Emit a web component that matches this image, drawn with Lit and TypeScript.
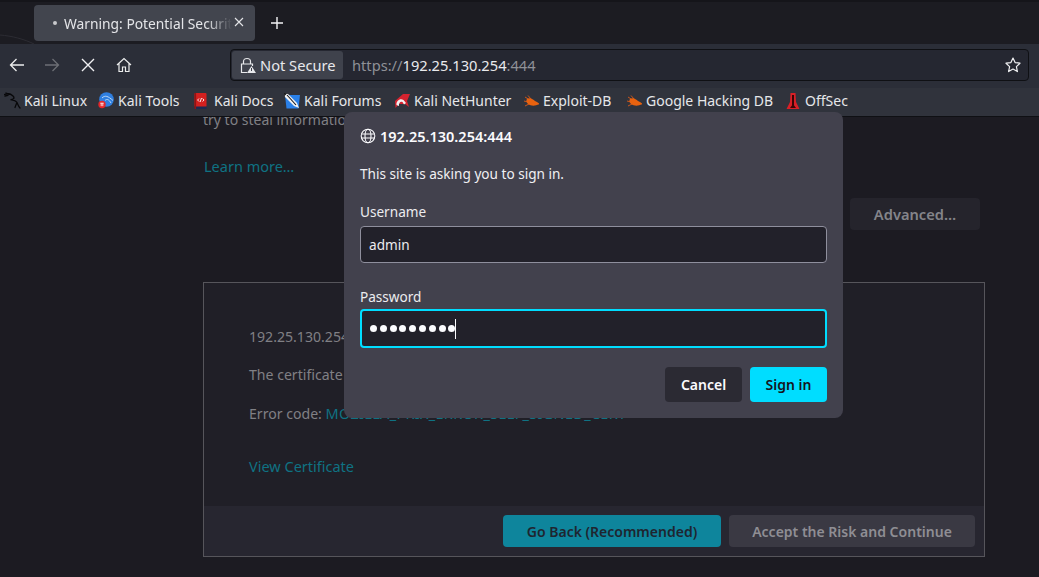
import { LitElement, html, css, svg } from "lit";
import { customElement } from "lit/decorators.js";

const bug = svg`<svg width="17" height="16" viewBox="0 0 17 16"><path d="M2 4 L6 6.5 M5 2.5 L8 6 M1 8 L5 9 M2 13 L6 11 M16 11 L12 10" stroke="#c9561c" stroke-width="1" fill="none"/><path d="M4 6 C7 4 10 6 12 8 C14 9 16 10 16 11 C12 13.5 8 13 5 11 C3 9 3 7 4 6Z" fill="#e8620f"/></svg>`;

const marks: Record<string, unknown> = {
  dragon: svg`<svg width="17" height="17" viewBox="0 0 17 17" fill="none" stroke="#08080a" stroke-width="1.3" stroke-linecap="round"><path d="M0.5 2.5 C4 1 7 2 9 4 C11 6 9.5 7.6 6.5 7.6 C9 8 12 8.6 13 10.6 C13.8 12.2 14.5 14.5 16 16"/><path d="M2 1 L5.5 2.4 M12.5 11.5 L11 15.5 M1 4 L4 3.4"/></svg>`,
  tools: svg`<svg width="16" height="17" viewBox="0 0 16 17"><circle cx="8.5" cy="7.5" r="7.3" fill="#2f7fe0"/><path d="M4 6 C7 3 10 4 15 8.5 M7 8.5 C9 6.5 11 7.5 13 11" stroke="#bcd8f6" stroke-width="1" fill="none"/><circle cx="4" cy="12.5" r="3.7" fill="#e3262a"/><path d="M2.3 11.2 H5.7 M3.2 11.2 V14.2 M4.8 11.2 V14.2" stroke="#fff" stroke-width=".8"/></svg>`,
  docs: svg`<svg width="13" height="16" viewBox="0 0 13 16"><rect x="0.5" y="0" width="12" height="14" rx="1" fill="#d3201f"/><rect x="0.5" y="13.5" width="12" height="2.5" fill="#1d2a52"/><rect x="0.5" y="0" width="1.6" height="16" fill="#8f1414"/><path d="M5 5.5 L3.6 7 L5 8.5 M8.6 5.5 L10 7 L8.6 8.5 M7.5 5 L6.1 9" stroke="#fff" stroke-width=".9" fill="none"/></svg>`,
  forums: svg`<svg width="16" height="16" viewBox="0 0 16 16"><path d="M1 2 H16 L14.5 15.5 H2.5Z" fill="#2a80e8"/><path d="M0.5 0.5 L4 1 L13 10 L15 15 L10 13 L1 4Z" fill="#f2f2f2"/><path d="M3 2 L12 12" stroke="#15151a" stroke-width="1.1"/><path d="M0 0 L3 0.5 L0.5 3Z" fill="#111"/></svg>`,
  hunter: svg`<svg width="16" height="16" viewBox="0 0 16 16"><path d="M1 8 L9 1 H16 L13 8 L15 14 L11 11 H5 L1.5 15Z" fill="#d5232f"/><path d="M2.5 12 C2 8 6 5 9.5 7 L12 10 L10 11.5 L8.5 9 C6.5 8 4.5 10 5 13Z" fill="#f1f1f1"/></svg>`,
  bug,
  offsec: svg`<svg width="16" height="18" viewBox="0 0 16 18"><path d="M5.5 1 H10.5 L11 10 L14.5 17 H1.5 L5 10Z" fill="#d91f26"/><path d="M8 3 V13" stroke="#3a0606" stroke-width="2"/><path d="M5 16 L8 12 L11 16Z" fill="#3a0606"/></svg>`,
};

const bookmarks: [string, string, number][] = [
  ["dragon", "Kali Linux", 94],
  ["tools", "Kali Tools", 96],
  ["docs", "Kali Docs", 90],
  ["forums", "Kali Forums", 110],
  ["hunter", "Kali NetHunter", 129],
  ["bug", "Exploit-DB", 103],
  ["bug", "Google Hacking DB", 159],
  ["offsec", "OffSec", 60],
];

@customElement("app-root")
export class AppRoot extends LitElement {
  static styles = css`
    :host {
      display: flex;
      flex-direction: column;
      width: 1039px;
      height: 577px;
      overflow: hidden;
      position: relative;
      background: #1c1b22;
      color: #fbfbfe;
      font-family: "Noto Sans", sans-serif;
      font-size: 14px;
    }
    svg { display: block; flex: none; }
    .tabstrip {
      height: 44px;
      box-sizing: border-box;
      flex: none;
      display: flex;
      align-items: flex-start;
      padding: 5px 0 0 34px;
      background: #1c1c22;
      border-top: 2px solid #15151a;
      position: relative;
    }
    .swirl { position: absolute; left: 0; top: 0; }
    .tab {
      width: 221px;
      height: 36px;
      margin-top: -2px;
      box-sizing: border-box;
      background: #42454e;
      border-radius: 4px;
      display: flex;
      align-items: center;
      padding-left: 19px;
      position: relative;
      font-size: 13.8px;
      color: #e4e5e8;
    }
    .dot { width: 4px; height: 4px; border-radius: 50%; background: #c8c9cc; margin-right: 7px; flex: none; }
    .title {
      width: 168px;
      white-space: nowrap;
      overflow: hidden;
      -webkit-mask-image: linear-gradient(to right, #000 85%, transparent);
      mask-image: linear-gradient(to right, #000 85%, transparent);
    }
    .tab .x { margin-left: 2px; margin-top: -2px; }
    .plus { margin: 10px 0 0 16px; }
    .nav {
      height: 44px;
      flex: none;
      box-sizing: border-box;
      background: #2b2e38;
      display: flex;
      align-items: center;
      padding: 0 10px 2px 9px;
    }
    .navicons { display: flex; align-items: center; gap: 19px; width: 221px; }
    .url {
      flex: 1;
      height: 32px;
      box-sizing: border-box;
      border: 1px solid #0f1014;
      border-radius: 4px;
      background: #252731;
      display: flex;
      align-items: center;
      padding: 0 2px 0 1px;
    }
    .secure {
      height: 28px;
      width: 111px;
      box-sizing: border-box;
      background: #3f424c;
      border-radius: 3px;
      display: flex;
      align-items: center;
      padding-left: 8px;
      gap: 4px;
      font-size: 14.67px;
      color: #e8e9ec;
      flex: none;
    }
    .addr { margin-left: 9px; font-size: 14.67px; color: #8f9197; flex: 1; }
    .addr b { font-weight: 400; color: #e9eaed; }
    .star { margin-right: 5px; }
    .bookmarks {
      height: 29px;
      flex: none;
      box-sizing: border-box;
      background: #30333c;
      border-bottom: 1px solid #0f1014;
      display: flex;
      align-items: center;
      padding: 0 0 3px 4px;
      font-size: 14px;
      color: #e6e7ea;
      position: relative;
      z-index: 1;
    }
    .bm { display: flex; align-items: center; gap: 4px; white-space: nowrap; flex: none; }
    .ic { width: 16px; display: flex; justify-content: flex-start; flex: none; }
    .page {
      flex: 1;
      min-height: 0;
      overflow: hidden;
      box-sizing: border-box;
      padding: 0 54px 0 203px;
      color: #808085;
      font-size: 14.5px;
    }
    .cut { margin-top: -9px; height: 24px; line-height: 24px; white-space: nowrap; font-size: 14px; }
    .learn { margin-top: 22px; height: 24px; line-height: 24px; color: #0f7283; padding-left: 1px; }
    .adv-row { display: flex; justify-content: flex-end; margin: 20px 5px 0 0; }
    .adv {
      width: 130px;
      height: 32px;
      border-radius: 4px;
      background: #25242c;
      color: #84848a;
      font-weight: 600;
      font-size: 14.67px;
      display: flex;
      align-items: center;
      justify-content: center;
    }
    .box {
      margin-top: 52px;
      height: 275px;
      box-sizing: border-box;
      border: 1px solid #56555b;
      background: #201f27;
      display: flex;
      flex-direction: column;
    }
    .info { flex: 1; padding: 42px 45px 0; font-size: 14.1px; }
    .info div { height: 24px; line-height: 24px; margin-bottom: 14px; white-space: nowrap; }
    .info .err { margin-bottom: 29px; }
    .code { letter-spacing: 0.3px; font-size: 14.5px; }
    .teal { color: #0f7283; }
    .info .view { font-size: 14.5px; }
    .foot {
      height: 50px;
      box-sizing: border-box;
      flex: none;
      background: #272630;
      display: flex;
      justify-content: flex-end;
      align-items: flex-start;
      padding: 9px 9px 0 0;
      gap: 8px;
      font-size: 14px;
    }
    .btn {
      height: 32px;
      border-radius: 4px;
      display: flex;
      align-items: center;
      justify-content: center;
      font-weight: 600;
    }
    .back { width: 218px; background: #0e859c; color: #1f2530; }
    .accept { width: 246px; background: #3a3943; color: #8f8e94; }
    .dialog {
      position: absolute;
      left: 344px;
      top: 112px;
      width: 499px;
      height: 306px;
      box-sizing: border-box;
      background: #42414d;
      border-radius: 8px;
      padding: 15px 16px 0;
      z-index: 2;
      color: #fbfbfe;
      font-size: 13.6px;
    }
    .host { display: flex; align-items: center; gap: 4px; font-weight: 600; height: 18px; font-size: 14.5px; }
    .msg { margin-top: 19px; height: 20px; line-height: 20px; color: #f0f0f3; }
    .lbl { height: 20px; line-height: 20px; color: #ececef; }
    .msg + .lbl { margin-top: 18px; }
    .field {
      margin-top: 4px;
      height: 37px;
      width: 467px;
      box-sizing: border-box;
      border: 1px solid #8f8f9d;
      border-radius: 4px;
      background: #22212a;
      display: flex;
      align-items: center;
      padding-left: 8px;
      color: #ececef;
    }
    .field + .lbl { margin-top: 24px; }
    .field.focus {
      margin-top: 2px;
      height: 39px;
      border: 2px solid #00ddff;
    }
    .dots { display: flex; gap: 2.8px; }
    .dots i { width: 7px; height: 7px; border-radius: 50%; background: #fbfbfe; display: block; }
    .caret { width: 1px; height: 20px; background: #fbfbfe; }
    .actions { display: flex; justify-content: flex-end; gap: 8px; margin-top: 19px; font-size: 14px; }
    .cancel { width: 77px; height: 35px; background: #2b2a33; color: #fbfbfe; }
    .signin { width: 77px; height: 35px; background: #00ddff; color: #15141a; }
  `;

  render() {
    return html`
      <div class="tabstrip">
        <svg class="swirl" width="60" height="44" viewBox="0 0 60 44" fill="none" stroke="#2c2c33"><path d="M0 33 C12 34 24 37 34 42"/></svg>
        <div class="tab">
          <span class="dot"></span>
          <span class="title">Warning: Potential Security Risk Ahead</span>
          <svg class="x" width="10" height="10" viewBox="0 0 10 10" stroke="#e4e5e8" stroke-width="1.1"><path d="M1 1 L9 9 M9 1 L1 9"/></svg>
        </div>
        <svg class="plus" width="12" height="12" viewBox="0 0 12 12" stroke="#f4f4f6" stroke-width="1.4"><path d="M6 0 V12 M0 6 H12"/></svg>
      </div>
      <div class="nav">
        <div class="navicons">
          <svg width="16" height="16" viewBox="0 0 16 16" fill="none" stroke="#eceded" stroke-width="1.3"><path d="M15 8 H1.5 M7.5 2 L1.5 8 L7.5 14"/></svg>
          <svg width="16" height="16" viewBox="0 0 16 16" fill="none" stroke="#6d6f75" stroke-width="1.3"><path d="M1 8 H14.5 M8.5 2 L14.5 8 L8.5 14"/></svg>
          <svg width="14" height="14" viewBox="0 0 14 14" fill="none" stroke="#f0f0f2" stroke-width="1.4" style="margin:0 1px 0 2px"><path d="M1 1 L13 13 M13 1 L1 13"/></svg>
          <svg width="16" height="16" viewBox="0 0 16 16" fill="none" stroke="#eceded" stroke-width="1.2" style="margin-left:1px"><path d="M1 8 L8 1.5 L15 8 M3 6.5 V14.5 H6.5 V10 H9.5 V14.5 H13 V6.5"/></svg>
        </div>
        <div class="url">
          <div class="secure">
            <svg width="16" height="17" viewBox="0 0 16 17" fill="none" stroke="#e8e9ec" stroke-width="1.2"><path d="M3.5 7 V4.5 C3.5 0.5 10.5 0.5 10.5 4.5 V7"/><path d="M7 15.5 H1.5 V7 H12.5 V9"/><path d="M11.5 9 L16 16 H7Z" fill="#e8e9ec" stroke="none"/><path d="M11.5 11 V14" stroke="#3f424c" stroke-width="1"/></svg>
            Not Secure
          </div>
          <div class="addr">https://<b>192.25.130.254</b>:444</div>
          <svg class="star" width="16" height="16" viewBox="0 0 16 16" fill="none" stroke="#f0f0f2" stroke-width="1.2" stroke-linejoin="round"><path d="M8 1 L10.1 5.6 L15 6.2 L11.4 9.6 L12.4 14.6 L8 12.1 L3.6 14.6 L4.6 9.6 L1 6.2 L5.9 5.6Z"/></svg>
        </div>
      </div>
      <div class="bookmarks">
        ${bookmarks.map(
          ([k, t, w]) => html`<div class="bm" style="width:${w}px"><span class="ic">${marks[k]}</span><span>${t}</span></div>`
        )}
      </div>
      <div class="page">
        <div class="cut">try to steal information like your passwords, emails, or credit card details.</div>
        <div class="learn">Learn more…</div>
        <div class="adv-row"><div class="adv">Advanced…</div></div>
        <div class="box">
          <div class="info">
            <div>192.25.130.254:444 uses an invalid security certificate.</div>
            <div>The certificate is not trusted because it is self-signed.</div>
            <div class="err">Error code: <span class="teal code">MOZILLA_PKIX_ERROR_SELF_SIGNED_CERT</span></div>
            <div class="teal view">View Certificate</div>
          </div>
          <div class="foot">
            <div class="btn back">Go Back (Recommended)</div>
            <div class="btn accept">Accept the Risk and Continue</div>
          </div>
        </div>
      </div>
      <div class="dialog">
        <div class="host">
          <svg width="16" height="16" viewBox="0 0 16 16" fill="none" stroke="#fbfbfe" stroke-width="1.1"><circle cx="8" cy="8" r="6.8"/><ellipse cx="8" cy="8" rx="3" ry="6.8"/><path d="M1.5 6 H14.5 M1.5 10 H14.5"/></svg>
          192.25.130.254:444
        </div>
        <div class="msg">This site is asking you to sign in.</div>
        <div class="lbl">Username</div>
        <div class="field">admin</div>
        <div class="lbl">Password</div>
        <div class="field focus">
          <span class="dots">${Array.from({ length: 9 }, () => html`<i></i>`)}</span><span class="caret"></span>
        </div>
        <div class="actions">
          <div class="btn cancel">Cancel</div>
          <div class="btn signin">Sign in</div>
        </div>
      </div>
    `;
  }
}
